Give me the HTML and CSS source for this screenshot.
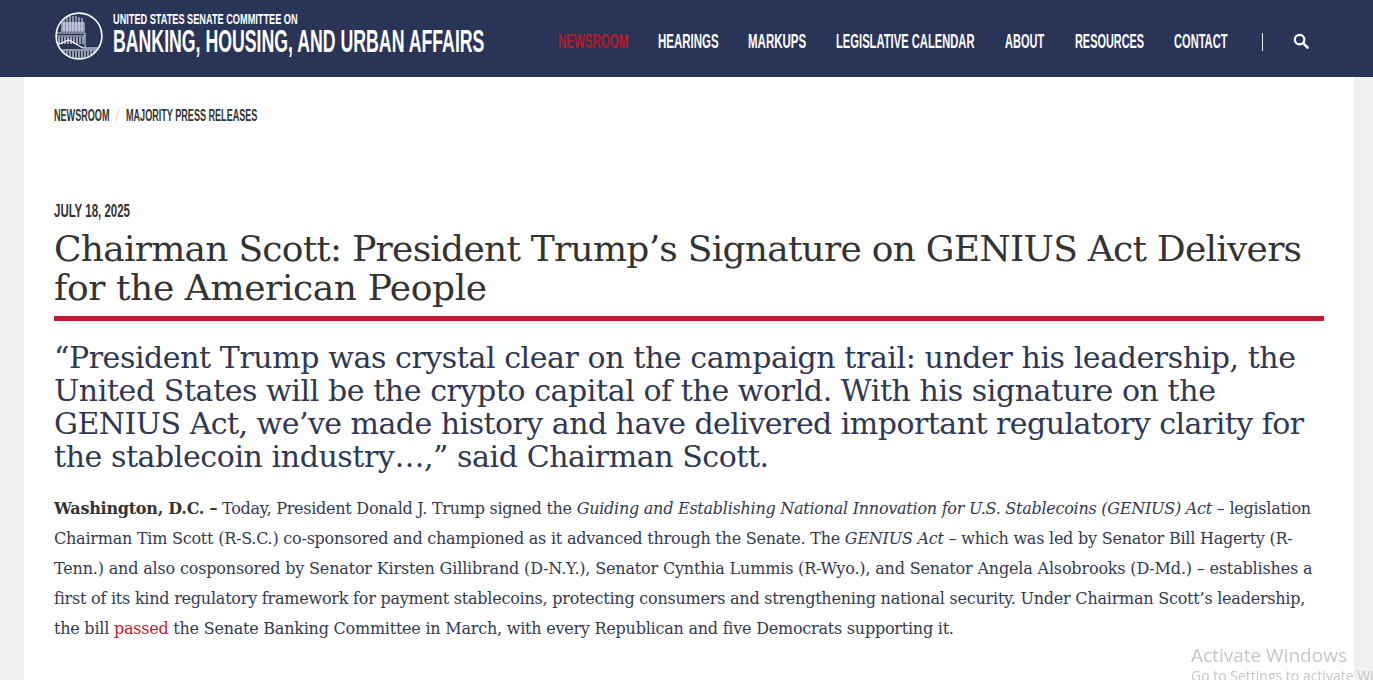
FILE: index.html
```html
<!DOCTYPE html>
<html lang="en">
<head>
<meta charset="utf-8">
<title>Chairman Scott: President Trump’s Signature on GENIUS Act</title>
<link rel="stylesheet" href="styles.css">
</head>
<body>
<header class="site-header">
  <a class="brand" href="#">
    <svg class="seal" viewBox="0 0 48 48" width="48" height="48" aria-hidden="true">
      <defs><clipPath id="c"><circle cx="24" cy="24" r="22.5"/></clipPath></defs>
      <g clip-path="url(#c)" fill="none" stroke="#c9cede">
        <path d="M6 10h24v10H6z" fill="#8f97b3" stroke="none"/>
        <path d="M9 5v14M12 5v14M15 4v15M18 4v15M21 4v15M24 5v14M27 6v13" stroke="#e8ebf3" stroke-width="1"/>
        <path d="M1 21h29M1 24h29" stroke-width="1"/>
        <path d="M4 25v7M7 25v7M10 25v7M13 25v7M16 25v7M19 25v7M22 25v7M25 25v7M28 25v7" stroke="#e8ebf3" stroke-width="1.2"/>
        <path d="M2 33l12-5 14 8" stroke="#fff" stroke-width="1.2"/>
        <path d="M28 36h22" stroke="#fff" stroke-width="1"/>
        <path d="M30 21v15" stroke="#dfe3ee" stroke-width="1"/>
        <path d="M2 38h46" stroke="#fff" stroke-width="1"/>
        <path d="M6 39v9M9 39v9M12 39v9M15 39v9M18 39v9M21 39v9M24 39v9M27 39v9M30 39v9M33 39v9M36 39v9M39 39v9M42 39v9" stroke="#dfe3ee" stroke-width="1.2"/>
      </g>
      <circle cx="24" cy="24" r="22.9" fill="none" stroke="#fff" stroke-width="1.6"/>
    </svg>
    <span class="brand-text">
      <span class="brand-top"><span class="squeeze">UNITED STATES SENATE COMMITTEE ON</span></span>
      <span class="brand-main"><span class="squeeze">BANKING, HOUSING, AND URBAN AFFAIRS</span></span>
    </span>
  </a>
  <nav class="main-nav">
    <a class="nav-link w-news is-active" href="#"><span class="squeeze">NEWSROOM</span></a>
    <a class="nav-link w-hear" href="#"><span class="squeeze">HEARINGS</span></a>
    <a class="nav-link w-mark" href="#"><span class="squeeze">MARKUPS</span></a>
    <a class="nav-link w-legi" href="#"><span class="squeeze">LEGISLATIVE CALENDAR</span></a>
    <a class="nav-link w-abou" href="#"><span class="squeeze">ABOUT</span></a>
    <a class="nav-link w-reso" href="#"><span class="squeeze">RESOURCES</span></a>
    <a class="nav-link w-cont" href="#"><span class="squeeze">CONTACT</span></a>
    <span class="nav-sep"></span>
    <svg class="search" viewBox="0 0 16 16" width="16" height="16" aria-hidden="true">
      <circle cx="6.6" cy="6.6" r="4.8" fill="none" stroke="#fff" stroke-width="2.2"/>
      <path d="M10.2 10.2l4.3 4.3" stroke="#fff" stroke-width="2.6" stroke-linecap="round"/>
    </svg>
  </nav>
</header>
<main class="content">
  <ol class="breadcrumb">
    <li class="crumb-a"><a class="squeeze" href="#">NEWSROOM</a></li>
    <li class="crumb-sep">/</li>
    <li class="crumb-b"><a class="squeeze" href="#">MAJORITY PRESS RELEASES</a></li>
  </ol>
  <p class="date"><span class="squeeze">JULY 18, 2025</span></p>
  <h1 class="title">Chairman Scott: President Trump’s Signature on GENIUS Act Delivers<br><span class="title-second">for the American People</span></h1>
  <h2 class="subtitle">“President Trump was crystal clear on the campaign trail: under his leadership, the<br>United States will be the crypto capital of the world. With his signature on the<br><span class="subtitle-tight">GENIUS Act, we’ve made history and have delivered important regulatory clarity for</span><br>the stablecoin industry…,” said Chairman Scott.</h2>
  <p class="body-text"><span class="body-tight"><strong>Washington, D.C. –</strong> Today, President Donald J. Trump signed the <em>Guiding and Establishing National Innovation for U.S. Stablecoins (GENIUS) Act</em> – legislation</span><br>Chairman Tim Scott (R-S.C.) co-sponsored and championed as it advanced through the Senate. The <em>GENIUS Act</em> – which was led by Senator Bill Hagerty (R-<br><span class="body-loose">Tenn.) and also cosponsored by Senator Kirsten Gillibrand (D-N.Y.), Senator Cynthia Lummis (R-Wyo.), and Senator Angela Alsobrooks (D-Md.) – establishes a</span><br>first of its kind regulatory framework for payment stablecoins, protecting consumers and strengthening national security. Under Chairman Scott’s leadership,<br>the bill <a class="inline-link" href="#">passed</a> the Senate Banking Committee in March, with every Republican and five Democrats supporting it.</p>
</main>
<div class="watermark">
  <div class="wm-title">Activate Windows</div>
  <div class="wm-sub">Go to Settings to activate Windows.</div>
</div>
</body>
</html>
```
FILE: styles.css
```css
* { box-sizing: border-box; }
html, body { height: 100%; }
body {
  margin: 0;
  height: 680px;
  overflow: hidden;
  background: #f1f1f1;
  color: #333;
  font-family: "DejaVu Serif", serif;
}
a { color: inherit; text-decoration: none; }
.squeeze {
  display: inline-block;
  white-space: nowrap;
  transform-origin: left center;
  transform: scaleX(var(--sx, 0.6));
}
.site-header {
  height: 77px;
  background: #2a3456;
  display: flex;
  align-items: center;
  padding: 0 64px 0 55px;
  justify-content: space-between;
}
.brand { display: flex; align-items: center; gap: 10px; color: #fff; }
.seal { display: block; flex: none; margin-top: -5px; }
.brand-text {
  display: flex;
  flex-direction: column;
  width: 372px;
  font-family: "Liberation Sans", sans-serif;
  font-weight: 700;
  margin-top: -10px;
}
.brand-top { display: block; height: 15px; font-size: 15px; line-height: 14px; --sx: 0.612; }
.brand-main { display: block; height: 28px; font-size: 31px; line-height: 30px; --sx: 0.571; }
.main-nav {
  display: flex;
  align-items: center;
  margin-top: 4px;
  font-family: "Liberation Sans", sans-serif;
  font-weight: 700;
  font-size: 20px;
  line-height: 24px;
  color: #fff;
  --sx: 0.575;
}
.nav-link { display: block; margin-right: 30px; }
.w-news { width: 70px; }
.w-hear { width: 60px; }
.w-mark { width: 58px; }
.w-legi { width: 139px; --sx: 0.56; }
.w-abou { width: 40px; --sx: 0.55; }
.w-reso { width: 69px; --sx: 0.545; }
.w-cont { width: 53px; --sx: 0.555; }
.nav-link.is-active { color: #b31b2c; }
.nav-sep { width: 1.5px; height: 18px; background: #e8e8ee; margin: 3px 0 0 5px; }
.search { flex: none; margin: 0 0 0 30px; }
.content {
  width: 1330px;
  margin-left: 24px;
  background: #fff;
  height: 603px;
  padding: 30px 30px 0;
}
.breadcrumb {
  list-style: none;
  margin: 0;
  padding: 0;
  display: flex;
  font-family: "Liberation Sans", sans-serif;
  font-weight: 700;
  font-size: 16px;
  line-height: 18px;
  color: #333;
  --sx: 0.567;
}
.crumb-a { width: 55px; }
.crumb-b { width: 131px; }
.crumb-sep { width: 17px; text-align: center; color: #ddd; font-weight: 400; }
.date {
  margin: 76px 0 0;
  font-family: "Liberation Sans", sans-serif;
  font-weight: 700;
  font-size: 18px;
  line-height: 20px;
  color: #333;
  --sx: 0.6375;
}
.title {
  margin: 8px 0 0;
  padding-bottom: 9px;
  border-bottom: 5px solid #c01b2e;
  font-size: 36px;
  line-height: 39px;
  letter-spacing: -0.75px;
  font-weight: 400;
  color: #333;
}
.title-second { letter-spacing: -0.4px; }
.subtitle {
  margin: 20px 0 0;
  font-size: 30px;
  line-height: 33px;
  letter-spacing: -0.42px;
  font-weight: 400;
  color: #2f3850;
  white-space: nowrap;
}
.subtitle-tight { letter-spacing: -0.53px; }
.body-text {
  margin: 21px 0 0;
  font-size: 16px;
  line-height: 30px;
  letter-spacing: -0.23px;
  color: #333a4f;
  white-space: nowrap;
}
.body-tight { letter-spacing: -0.255px; }
.body-loose { letter-spacing: -0.17px; }
.body-text strong { color: #333; }
.inline-link { color: #c01b2e; }
.watermark {
  position: fixed;
  left: 1191px;
  top: 644px;
  width: 182px;
  overflow: hidden;
  white-space: nowrap;
  font-family: "Open Sans", sans-serif;
  color: #c6c6c6;
}
.wm-title { font-size: 19px; line-height: 23px; }
.wm-sub { font-size: 14px; line-height: 18px; }
```
